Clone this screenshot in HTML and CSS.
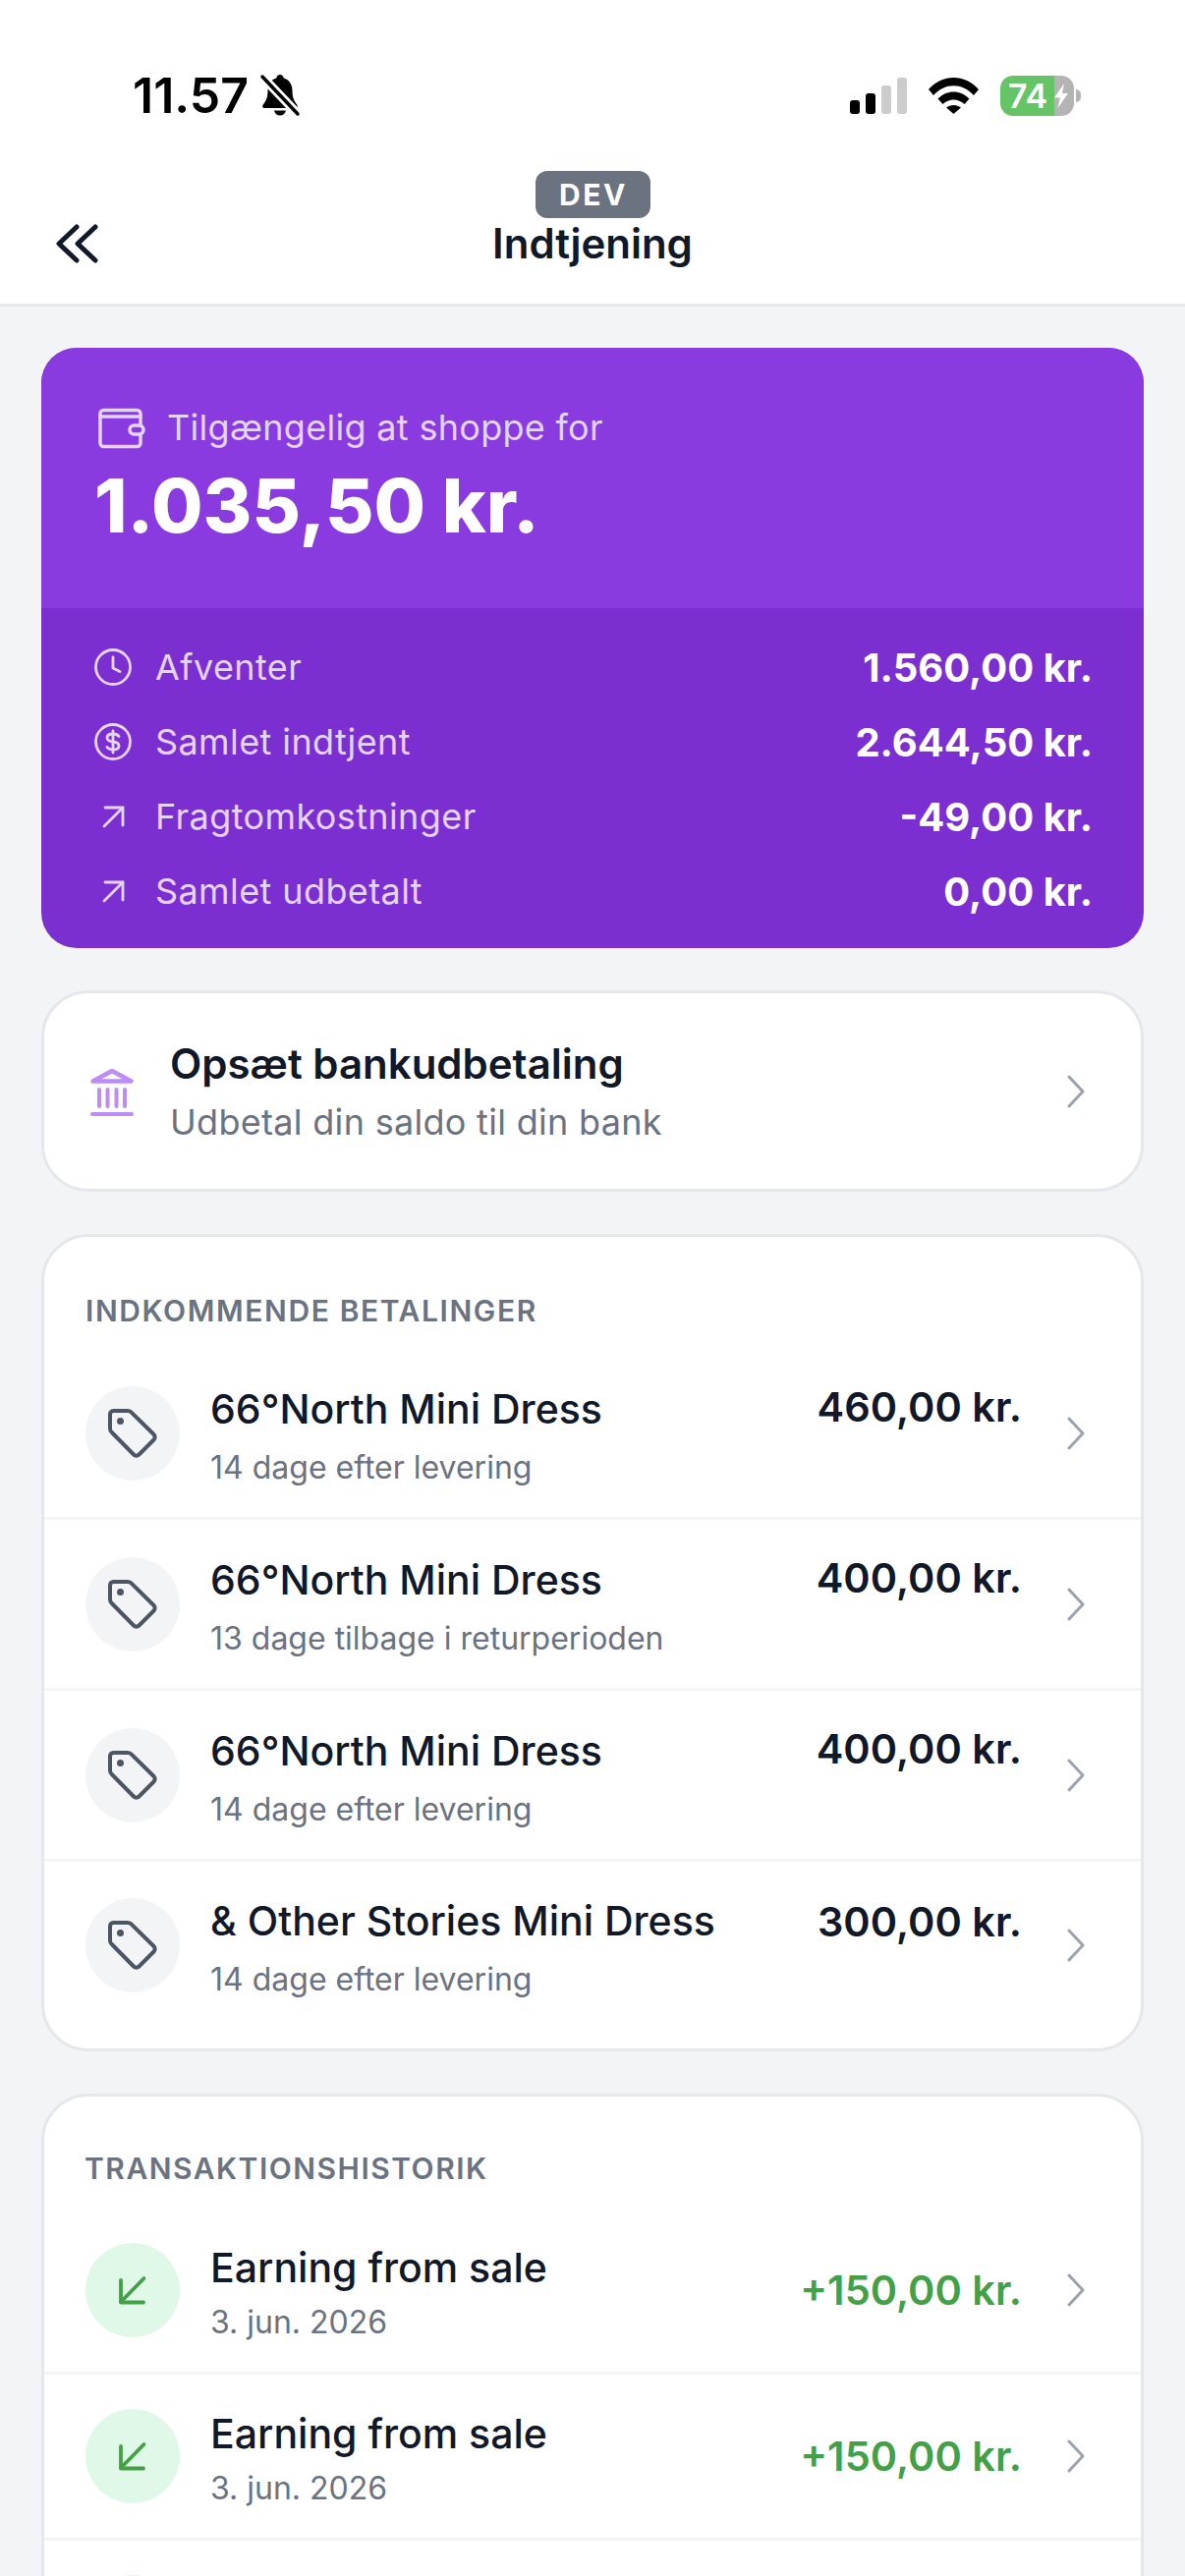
FILE: index.html
```html
<!DOCTYPE html>
<html lang="da">
<head>
  <meta charset="UTF-8">
  <meta name="viewport" content="width=device-width, initial-scale=1.0">
  <title>Indtjening</title>
  <link rel="stylesheet" href="styles.css">
</head>
<body>

  <!-- Top bar -->
  <header class="top-bar">
    <div class="status-bar">
      <div class="status-left">
        <span class="status-time">11.57</span>
        <svg class="bell-icon" viewBox="0 0 42 44"><path d="M21 1c-2 0-3.400 1.500-3.600 3.400C11.500 6 8.500 11 8.500 17c0 8-2 11-5 15-.8 1.200 0 3 1.500 3h32c1.500 0 2.300-1.800 1.500-3-3-4-5-7-5-15 0-6-3-11-8.900-12.600C24.400 2.500 23 1 21 1z" fill="#000"/><path d="M15 37.500c.6 3 3 5 6 5s5.400-2 6-5z" fill="#000"/><path d="M3 3l36 38" stroke="#fff" stroke-width="9"/><path d="M3 3l36 38" stroke="#000" stroke-width="3.500" stroke-linecap="round"/></svg>
      </div>
      <div class="status-right">
        <svg class="signal-icon" viewBox="0 0 58 37">
          <rect x="0" y="23" width="10" height="14" rx="3" fill="#000"/>
          <rect x="16" y="16" width="10" height="21" rx="3" fill="#000"/>
          <rect x="32" y="8" width="10" height="29" rx="3" fill="#ccc"/>
          <rect x="48" y="0" width="10" height="37" rx="3" fill="#ccc"/>
        </svg>
        <svg class="wifi-icon" viewBox="0 0 51 37">
          <path d="M0 12C14-4 37-4 51 12l-5 6C34 5 17 5 5 18z" fill="#000"/>
          <path d="M9.500 21.500c9-9.500 23-9.500 32 0l-5 5.500c-6.500-6-15.500-6-22 0z" fill="#000"/>
          <path d="M18 30.500c4.500-3.500 10.500-3.500 15 0L25.500 37z" fill="#000"/>
        </svg>
        <div class="battery">
          <div class="battery-body">
            <span class="battery-level">74</span>
            <svg class="bolt-icon" viewBox="0 0 14 25"><path d="M10 0L0 14.500h6L3.500 25 14 10H8z" fill="#fff"/></svg>
          </div>
          <div class="battery-nub"></div>
        </div>
      </div>
    </div>
    <nav class="nav-bar">
      <div class="nav-left">
        <svg class="back-icon" viewBox="0 0 44 40" fill="none" stroke="#111827" stroke-width="5" stroke-linecap="round" stroke-linejoin="round"><path d="M22 3L4 20l18 17"/><path d="M41 3L23 20l18 17"/></svg>
      </div>
      <div class="nav-center">
        <span class="dev-badge">DEV</span>
        <h1 class="nav-title">Indtjening</h1>
      </div>
      <div></div>
    </nav>
  </header>

  <main class="content">

    <!-- Balance card -->
    <section class="balance-card">
      <div class="balance-top">
        <div class="balance-label">
          <svg class="wallet-icon" viewBox="0 0 48 44" fill="none" stroke="#e4d3fa" stroke-width="3.500" stroke-linejoin="round" stroke-linecap="round"><path d="M2 8V38c0 2 1.500 3.500 3.500 3.500h34c2 0 3.500-1.500 3.500-3.500V8c0-2-1.500-3.500-3.500-3.500h-34C3.500 4.500 2 6 2 8z"/><path d="M2 11h41"/><rect x="32" y="20" width="14" height="9" rx="4.500" fill="#8a3bdf"/></svg>
          <span>Tilgængelig at shoppe for</span>
        </div>
        <div class="balance-amount">1.035,50 kr.</div>
      </div>
      <div class="balance-rows">
        <div class="balance-row">
          <svg class="balance-icon" viewBox="0 0 38 38" fill="none" stroke="#e4d3fa" stroke-width="2.800" stroke-linecap="round" stroke-linejoin="round"><circle cx="19" cy="19" r="17.500"/><path d="M19 9v11l7 3.500"/></svg>
          <span class="balance-name">Afventer</span>
          <span class="balance-value">1.560,00 kr.</span>
        </div>
        <div class="balance-row">
          <svg class="balance-icon" viewBox="0 0 38 38" fill="none" stroke="#e4d3fa" stroke-width="2.800" stroke-linecap="round" stroke-linejoin="round"><circle cx="19" cy="19" r="17.500"/><path d="M25 13.500c-1-1.500-3-2.500-6-2.500-3.500 0-6 1.500-6 4s2.500 3.500 6 4 6 1.500 6 4-2.500 4-6 4c-3 0-5-1-6-2.500"/><path d="M19 8v22"/></svg>
          <span class="balance-name">Samlet indtjent</span>
          <span class="balance-value">2.644,50 kr.</span>
        </div>
        <div class="balance-row">
          <svg class="balance-icon" viewBox="0 0 38 38" fill="none" stroke="#e4d3fa" stroke-width="2.800" stroke-linecap="round" stroke-linejoin="round"><path d="M10 29L29 10"/><path d="M11 10h18v18"/></svg>
          <span class="balance-name">Fragtomkostninger</span>
          <span class="balance-value">-49,00 kr.</span>
        </div>
        <div class="balance-row">
          <svg class="balance-icon" viewBox="0 0 38 38" fill="none" stroke="#e4d3fa" stroke-width="2.800" stroke-linecap="round" stroke-linejoin="round"><path d="M10 29L29 10"/><path d="M11 10h18v18"/></svg>
          <span class="balance-name">Samlet udbetalt</span>
          <span class="balance-value">0,00 kr.</span>
        </div>
      </div>
    </section>

    <!-- Bank payout -->
    <section class="card bank-card">
      <svg class="bank-icon" viewBox="0 0 44 48" fill="none" stroke="#bd8cf7" stroke-linecap="round" stroke-linejoin="round"><path d="M2.500 12.500L22 2l19.500 10.500z" stroke-width="4.500"/><path d="M9 21v17M17.500 21v17M26.500 21v17M35 21v17" stroke-width="4"/><path d="M2 46h40" stroke-width="4"/></svg>
      <div class="bank-text">
        <div class="bank-title">Opsæt bankudbetaling</div>
        <div class="bank-sub">Udbetal din saldo til din bank</div>
      </div>
      <svg class="chevron" viewBox="0 0 18 34" fill="none" stroke="#9ca3af" stroke-width="3" stroke-linecap="round" stroke-linejoin="round"><path d="M2 2l14 15L2 32"/></svg>
    </section>

    <!-- Incoming payments -->
    <section class="card">
      <h2 class="card-heading">INDKOMMENDE BETALINGER</h2>
      <div class="row row-incoming">
        <div class="row-circle"><svg class="tag-icon" viewBox="0 0 52 52" fill="none" stroke="#4b5563" stroke-width="4" stroke-linejoin="round"><path d="M3 6.500C3 4.500 4.500 3 6.500 3H21c1.500 0 3 .6 4 1.800L47.500 27c1.500 1.500 1.500 4 0 5.500l-15 15c-1.500 1.500-4 1.500-5.500 0L4.800 25C3.600 24 3 22.500 3 21z"/><circle cx="13.500" cy="13.500" r="1.500" fill="#4b5563"/></svg></div>
        <div class="row-text">
          <div class="row-title">66°North Mini Dress</div>
          <div class="row-sub">14 dage efter levering</div>
        </div>
        <div class="row-price">460,00 kr.</div>
        <svg class="chevron" viewBox="0 0 18 34" fill="none" stroke="#9ca3af" stroke-width="3" stroke-linecap="round" stroke-linejoin="round"><path d="M2 2l14 15L2 32"/></svg>
      </div>
      <div class="row row-incoming">
        <div class="row-circle"><svg class="tag-icon" viewBox="0 0 52 52" fill="none" stroke="#4b5563" stroke-width="4" stroke-linejoin="round"><path d="M3 6.500C3 4.500 4.500 3 6.500 3H21c1.500 0 3 .6 4 1.800L47.500 27c1.500 1.500 1.500 4 0 5.500l-15 15c-1.500 1.500-4 1.500-5.500 0L4.800 25C3.600 24 3 22.500 3 21z"/><circle cx="13.500" cy="13.500" r="1.500" fill="#4b5563"/></svg></div>
        <div class="row-text">
          <div class="row-title">66°North Mini Dress</div>
          <div class="row-sub">13 dage tilbage i returperioden</div>
        </div>
        <div class="row-price">400,00 kr.</div>
        <svg class="chevron" viewBox="0 0 18 34" fill="none" stroke="#9ca3af" stroke-width="3" stroke-linecap="round" stroke-linejoin="round"><path d="M2 2l14 15L2 32"/></svg>
      </div>
      <div class="row row-incoming">
        <div class="row-circle"><svg class="tag-icon" viewBox="0 0 52 52" fill="none" stroke="#4b5563" stroke-width="4" stroke-linejoin="round"><path d="M3 6.500C3 4.500 4.500 3 6.500 3H21c1.500 0 3 .6 4 1.800L47.500 27c1.500 1.500 1.500 4 0 5.500l-15 15c-1.500 1.500-4 1.500-5.500 0L4.800 25C3.600 24 3 22.500 3 21z"/><circle cx="13.500" cy="13.500" r="1.500" fill="#4b5563"/></svg></div>
        <div class="row-text">
          <div class="row-title">66°North Mini Dress</div>
          <div class="row-sub">14 dage efter levering</div>
        </div>
        <div class="row-price">400,00 kr.</div>
        <svg class="chevron" viewBox="0 0 18 34" fill="none" stroke="#9ca3af" stroke-width="3" stroke-linecap="round" stroke-linejoin="round"><path d="M2 2l14 15L2 32"/></svg>
      </div>
      <div class="row row-incoming">
        <div class="row-circle"><svg class="tag-icon" viewBox="0 0 52 52" fill="none" stroke="#4b5563" stroke-width="4" stroke-linejoin="round"><path d="M3 6.500C3 4.500 4.500 3 6.500 3H21c1.500 0 3 .6 4 1.800L47.500 27c1.500 1.500 1.500 4 0 5.500l-15 15c-1.500 1.500-4 1.500-5.500 0L4.800 25C3.600 24 3 22.500 3 21z"/><circle cx="13.500" cy="13.500" r="1.500" fill="#4b5563"/></svg></div>
        <div class="row-text">
          <div class="row-title">&amp; Other Stories Mini Dress</div>
          <div class="row-sub">14 dage efter levering</div>
        </div>
        <div class="row-price">300,00 kr.</div>
        <svg class="chevron" viewBox="0 0 18 34" fill="none" stroke="#9ca3af" stroke-width="3" stroke-linecap="round" stroke-linejoin="round"><path d="M2 2l14 15L2 32"/></svg>
      </div>
    </section>

    <!-- Transaction history -->
    <section class="card">
      <h2 class="card-heading heading-history">TRANSAKTIONSHISTORIK</h2>
      <div class="row row-history">
        <div class="row-circle circle-green"><svg class="earn-icon" viewBox="0 0 34 34" fill="none" stroke="#43a047" stroke-width="3.800" stroke-linecap="round" stroke-linejoin="round"><path d="M28.500 5L5 29"/><path d="M5 7v22.500h23"/></svg></div>
        <div class="row-text">
          <div class="row-title">Earning from sale</div>
          <div class="row-sub">3. jun. 2026</div>
        </div>
        <div class="row-price price-green">+150,00 kr.</div>
        <svg class="chevron" viewBox="0 0 18 34" fill="none" stroke="#9ca3af" stroke-width="3" stroke-linecap="round" stroke-linejoin="round"><path d="M2 2l14 15L2 32"/></svg>
      </div>
      <div class="row row-history">
        <div class="row-circle circle-green"><svg class="earn-icon" viewBox="0 0 34 34" fill="none" stroke="#43a047" stroke-width="3.800" stroke-linecap="round" stroke-linejoin="round"><path d="M28.500 5L5 29"/><path d="M5 7v22.500h23"/></svg></div>
        <div class="row-text">
          <div class="row-title">Earning from sale</div>
          <div class="row-sub">3. jun. 2026</div>
        </div>
        <div class="row-price price-green">+150,00 kr.</div>
        <svg class="chevron" viewBox="0 0 18 34" fill="none" stroke="#9ca3af" stroke-width="3" stroke-linecap="round" stroke-linejoin="round"><path d="M2 2l14 15L2 32"/></svg>
      </div>
      <div class="row row-history">
        <div class="row-circle circle-green"></div>
      </div>
    </section>

  </main>

</body>
</html>
```

FILE: styles.css
```css
/* Page */
body {
  margin: 0;
  width: 1206px;
  height: 2622px;
  overflow: hidden;
  background-color: #f3f4f6;
  font-family: Inter, "Noto Sans", sans-serif;
  color: #111827;
}

/* Status bar and nav */
.top-bar {
  background-color: #fff;
  border-bottom: 3px solid #e5e7eb;
}

.status-bar {
  height: 174px;
  box-sizing: border-box;
  padding: 72px 106px 0 135px;
  display: flex;
  justify-content: space-between;
  align-items: flex-start;
}

.status-left {
  display: flex;
  align-items: center;
  gap: 11px;
}

.status-time {
  font-size: 50px;
  font-weight: 600;
  line-height: 50px;
  color: #000;
}

.bell-icon {
  width: 42px;
  height: 44px;
}

.status-right {
  display: flex;
  align-items: center;
  gap: 22px;
  padding-top: 5px;
}

.signal-icon {
  width: 58px;
  height: 37px;
}

.wifi-icon {
  width: 51px;
  height: 37px;
}

.battery {
  display: flex;
  align-items: center;
  gap: 2px;
}

.battery-body {
  width: 75px;
  height: 41px;
  border-radius: 13px;
  overflow: hidden;
  display: flex;
  background: linear-gradient(to right, #65c466 73%, #b4b4b4 73%);
  align-items: center;
  padding-left: 8px;
  box-sizing: border-box;
}

.battery-level {
  width: 47px;
  font-size: 34px;
  font-weight: 600;
  color: #fff;
  line-height: 41px;
}

.bolt-icon {
  width: 14px;
  height: 25px;
}

.battery-nub {
  width: 5px;
  height: 13px;
  background-color: #b4b4b4;
  border-radius: 0 6px 6px 0;
}

.nav-bar {
  height: 135px;
  display: grid;
  grid-template-columns: 1fr auto 1fr;
  align-items: flex-end;
}

.nav-left {
  padding: 0 0 41px 56px;
  display: flex;
}

.back-icon {
  width: 44px;
  height: 40px;
}

.nav-center {
  display: flex;
  flex-direction: column;
  align-items: center;
  padding-bottom: 35px;
}

.dev-badge {
  width: 117px;
  height: 48px;
  margin-left: 2px;
  background-color: #6b7280;
  border-radius: 12px;
  color: #fff;
  font-size: 30px;
  font-weight: 700;
  letter-spacing: 2.500px;
  text-align: center;
  line-height: 48px;
}

.nav-title {
  margin: 0;
  font-size: 42px;
  font-weight: 600;
  line-height: 52px;
}

/* Content column */
.content {
  padding: 42px 42px 0;
  display: flex;
  flex-direction: column;
  gap: 43px;
}

/* Balance card */
.balance-card {
  border-radius: 36px;
  overflow: hidden;
  background-color: #7c2fd0;
  color: #fff;
}

.balance-top {
  height: 265px;
  box-sizing: border-box;
  padding: 56px 54px 0;
  background-color: #8a3bdf;
}

.balance-label {
  display: flex;
  align-items: center;
  gap: 22px;
  font-size: 36px;
  letter-spacing: 0.3px;
  line-height: 50px;
  color: #e4d3fa;
}

.wallet-icon {
  width: 48px;
  height: 44px;
  margin-left: 4px;
}

.balance-amount {
  font-size: 76px;
  font-weight: 800;
  line-height: 90px;
  margin-top: 9px;
}

.balance-rows {
  height: 346px;
  box-sizing: border-box;
  padding: 22px 54px 0;
  display: flex;
  flex-direction: column;
}

.balance-row {
  height: 76px;
  display: flex;
  align-items: center;
  gap: 24px;
}

.balance-icon {
  width: 38px;
  height: 38px;
}

.balance-name {
  flex: 1;
  font-size: 36px;
  letter-spacing: 0.4px;
  color: #e4d3fa;
}

.balance-value {
  font-size: 40px;
  font-weight: 700;
  margin-right: -2px;
}

/* White cards */
.card {
  background-color: #fff;
  border: 3px solid #e5e7eb;
  border-radius: 48px;
  overflow: hidden;
}

.bank-card {
  height: 205px;
  box-sizing: border-box;
  padding: 0 57px 0 47px;
  display: flex;
  align-items: center;
}

.bank-icon {
  width: 44px;
  height: 48px;
  margin-top: 2px;
}

.bank-text {
  flex: 1;
  margin-left: 37px;
}

.bank-title {
  font-size: 42px;
  font-weight: 600;
  line-height: 56px;
  margin-top: 4px;
}

.bank-sub {
  font-size: 36px;
  letter-spacing: 0.3px;
  line-height: 58px;
  margin-top: 2px;
  color: #6b7280;
}

.chevron {
  width: 18px;
  height: 34px;
  flex-shrink: 0;
}

.card-heading {
  margin: 0;
  padding: 54px 42px 0;
  font-size: 30px;
  font-weight: 600;
  line-height: 42px;
  letter-spacing: 1.600px;
  color: #6b7280;
}

.heading-history {
  padding: 52px 41px 0;
  letter-spacing: 1.500px;
}

/* List rows */
.row {
  padding: 0 57px 0 42px;
  display: flex;
  align-items: center;
  border-top: 3px solid #f3f4f6;
}

.row:first-of-type {
  border-top: none;
}

.row-incoming {
  height: 171px;
}

.row-incoming:first-of-type {
  margin-top: 18px;
}

.row-incoming:last-child {
  height: 193px;
  padding-bottom: 21px;
  box-sizing: border-box;
}

.row-incoming .row-price {
  align-self: flex-start;
  padding-top: 31px;
}

.row-incoming:last-child .row-price {
  padding-top: 33px;
}

.row-history {
  height: 166px;
}

.row-history:first-of-type {
  margin-top: 20px;
}

.row-circle {
  width: 96px;
  height: 96px;
  border-radius: 50%;
  background-color: #f3f4f6;
  display: flex;
  align-items: center;
  justify-content: center;
  flex-shrink: 0;
}

.circle-green {
  background-color: #e0f8e8;
}

.tag-icon {
  width: 52px;
  height: 52px;
}

.earn-icon {
  width: 34px;
  height: 34px;
}

.row-text {
  flex: 1;
  margin-left: 31px;
  padding-top: 9px;
}

.row-title {
  font-size: 41px;
  font-weight: 500;
  line-height: 52px;
}

.row-sub {
  font-size: 32px;
  line-height: 50px;
  margin-top: 9px;
  color: #6b7280;
}

.row-history .row-sub {
  margin-top: 5px;
}

.row-price {
  margin-right: 46px;
  font-size: 41.500px;
  font-weight: 600;
  line-height: 56px;
}

.price-green {
  color: #43a047;
}
```
